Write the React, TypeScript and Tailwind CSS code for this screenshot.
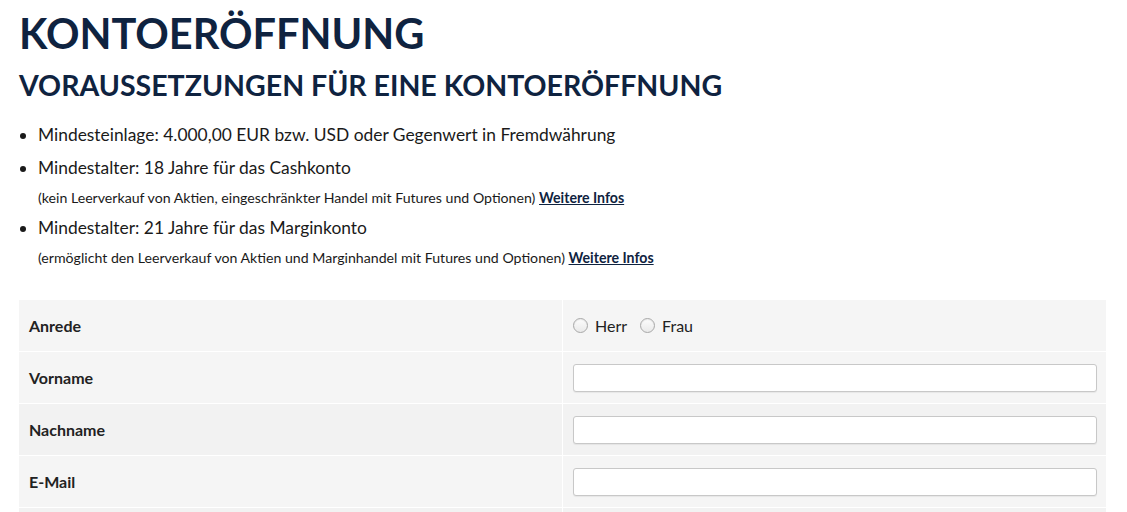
import { useState } from 'react';

const rows = ['Vorname', 'Nachname', 'E-Mail', 'Straße'];

export default function App() {
  const [anrede, setAnrede] = useState('');

  return (
    <div className="min-h-screen bg-white font-['Lato',sans-serif] text-[#1a1a1a]">
      <div className="pl-[19px] pt-[9px] w-[1106px] box-content">
        <h1 className="text-[41.5px] leading-[48px] font-bold text-[#0f2340]">KONTOERÖFFNUNG</h1>
        <h2 className="mt-[12px] text-[28.5px] leading-[32px] font-bold text-[#0f2340]">
          VORAUSSETZUNGEN FÜR EINE KONTOERÖFFNUNG
        </h2>

        <ul className="mt-[17px] ml-[19px] list-disc text-[17.4px] text-[#1a1a1a]">
          <li className="leading-[33px]">Mindesteinlage: 4.000,00 EUR bzw. USD oder Gegenwert in Fremdwährung</li>
          <li className="leading-[33px]">
            Mindestalter: 18 Jahre für das Cashkonto
            <p className="text-[14.15px] leading-[27px]">
              (kein Leerverkauf von Aktien, eingeschränkter Handel mit Futures und Optionen){' '}
              <a href="#" className="font-bold underline text-[#0f2340]">Weitere Infos</a>
            </p>
          </li>
          <li className="leading-[33px]">
            Mindestalter: 21 Jahre für das Marginkonto
            <p className="text-[14.15px] leading-[27px]">
              (ermöglicht den Leerverkauf von Aktien und Marginhandel mit Futures und Optionen){' '}
              <a href="#" className="font-bold underline text-[#0f2340]">Weitere Infos</a>
            </p>
          </li>
        </ul>

        <div className="mt-[29px] w-[1087px] flex flex-col gap-px">
          <div className="grid grid-cols-[543px_1fr] gap-px h-[51px]">
            <div className="bg-[#f5f5f5] flex items-center px-[10px] text-[16px] font-bold text-[#222]">Anrede</div>
            <div className="bg-[#f5f5f5] flex items-center px-[10px] gap-[13px] text-[16px] text-[#222]">
              {['Herr', 'Frau'].map((v) => (
                <label key={v} className="flex items-center gap-[7px] cursor-pointer">
                  <span
                    onClick={() => setAnrede(v)}
                    className="w-[15px] h-[15px] rounded-full border border-[#a8a8a8] bg-gradient-to-b from-[#fdfdfd] to-[#e9e9e9] shadow-[inset_0_1px_1px_rgba(0,0,0,0.08)] flex items-center justify-center"
                  >
                    {anrede === v && <span className="w-[7px] h-[7px] rounded-full bg-[#333]" />}
                  </span>
                  {v}
                </label>
              ))}
            </div>
          </div>
          {rows.map((r, i) => (
            <div key={r} className="grid grid-cols-[543px_1fr] gap-px h-[51px]">
              <div className={`${i % 2 === 0 ? 'bg-[#f5f5f5]' : 'bg-[#f2f2f2]'} flex items-center px-[10px] text-[16px] font-bold text-[#222]`}>
                {r}
              </div>
              <div className={`${i % 2 === 0 ? 'bg-[#f5f5f5]' : 'bg-[#f2f2f2]'} flex items-center pl-[10px] pr-[9px]`}>
                <input
                  type="text"
                  className="w-full h-[28px] rounded-[3px] border border-[#c8c8c8] bg-white px-2 text-[14px] outline-none shadow-[0_1px_1px_rgba(0,0,0,0.06)]"
                />
              </div>
            </div>
          ))}
        </div>
      </div>
    </div>
  );
}
